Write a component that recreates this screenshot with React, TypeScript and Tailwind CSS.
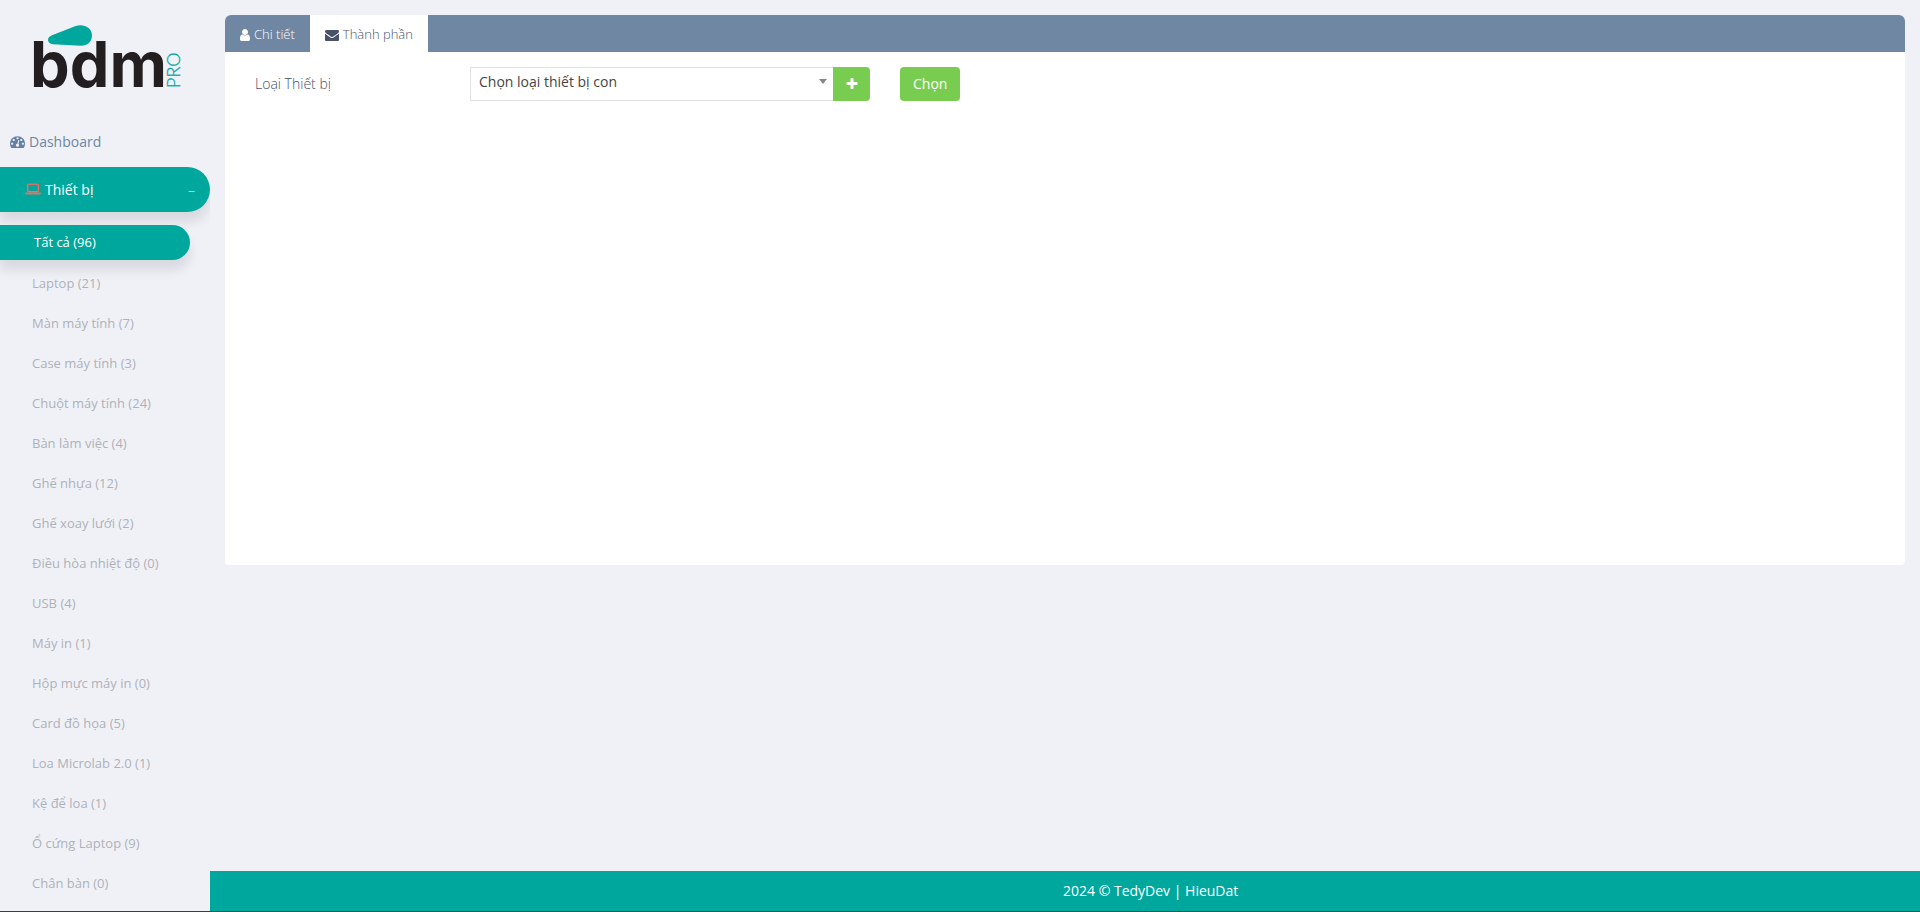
import type { ReactNode } from 'react';

const categories = [
    { name: 'Laptop', count: 21 },
    { name: 'Màn máy tính', count: 7 },
    { name: 'Case máy tính', count: 3 },
    { name: 'Chuột máy tính', count: 24 },
    { name: 'Bàn làm việc', count: 4 },
    { name: 'Ghế nhựa', count: 12 },
    { name: 'Ghế xoay lưới', count: 2 },
    { name: 'Điều hòa nhiệt độ', count: 0 },
    { name: 'USB', count: 4 },
    { name: 'Máy in', count: 1 },
    { name: 'Hộp mực máy in', count: 0 },
    { name: 'Card đồ họa', count: 5 },
    { name: 'Loa Microlab 2.0', count: 1 },
    { name: 'Kệ để loa', count: 1 },
    { name: 'Ổ cứng Laptop', count: 9 },
    { name: 'Chân bàn', count: 0 },
];

function Glyph({ viewBox, d, className }: { viewBox: string; d: string; className: string }) {
    return (
        <svg viewBox={viewBox} fill="currentColor" aria-hidden="true" className={`shrink-0 ${className}`}>
            <path d={d} />
        </svg>
    );
}

function DashboardIcon() {
    return (
        <Glyph
            viewBox="0 0 1792 1792"
            className="mb-0.5 size-[15px] text-[#6480a3]"
            d="M384 1152q0-53-37.5-90.5t-90.5-37.5-90.5 37.5-37.5 90.5 37.5 90.5 90.5 37.5 90.5-37.5 37.5-90.5zm192-448q0-53-37.5-90.5t-90.5-37.5-90.5 37.5-37.5 90.5 37.5 90.5 90.5 37.5 90.5-37.5 37.5-90.5zm428 481l101-382q6-26-7.5-48.5t-38.5-29.5-48 6.5-30 39.5l-101 382q-60 5-107 43.5t-63 98.5q-20 77 20 146t117 89 146-20 89-117q16-60-6-117t-72-91zm660-33q0-53-37.5-90.5t-90.5-37.5-90.5 37.5-37.5 90.5 37.5 90.5 90.5 37.5 90.5-37.5 37.5-90.5zm-640-640q0-53-37.5-90.5t-90.5-37.5-90.5 37.5-37.5 90.5 37.5 90.5 90.5 37.5 90.5-37.5 37.5-90.5zm448 192q0-53-37.5-90.5t-90.5-37.5-90.5 37.5-37.5 90.5 37.5 90.5 90.5 37.5 90.5-37.5 37.5-90.5zm320 448q0 261-141 483-19 29-54 29h-1402q-35 0-54-29-141-221-141-483 0-182 71-348t191-286 286-191 348-71 348 71 286 191 191 286 71 348z"
        />
    );
}

function LaptopIcon() {
    return (
        <Glyph
            viewBox="0 0 1920 1792"
            className="h-[15px] w-4 stroke-current stroke-[30] text-[#ff6c60]"
            d="M416 1216q-66 0-113-47t-47-113v-704q0-66 47-113t113-47h1088q66 0 113 47t47 113v704q0 66-47 113t-113 47h-1088zm-32-864v704q0 13 9.5 22.5t22.5 9.5h1088q13 0 22.5-9.5t9.5-22.5v-704q0-13-9.5-22.5t-22.5-9.5h-1088q-13 0-22.5 9.5t-9.5 22.5zm1376 928h160v96q0 40-47 68t-113 28h-1600q-66 0-113-28t-47-68v-96h1760zm-720 96q16 0 16-16t-16-16h-160q-16 0-16 16t16 16h160z"
        />
    );
}

function UserIcon() {
    return (
        <Glyph
            viewBox="0 0 1280 1792"
            className="h-3.5 w-2.5"
            d="M1280 1399q0 109-62.5 187t-150.5 78h-854q-88 0-150.5-78t-62.5-187q0-85 8.5-160.5t31.5-152 58.5-131 94-89 134.5-34.5q131 128 313 128t313-128q76 0 134.5 34.5t94 89 58.5 131 31.5 152 8.5 160.5zm-256-887q0 159-112.5 271.5t-271.5 112.5-271.5-112.5-112.5-271.5 112.5-271.5 271.5-112.5 271.5 112.5 112.5 271.5z"
        />
    );
}

function EnvelopeIcon() {
    return (
        <Glyph
            viewBox="0 0 1792 1792"
            className="size-3.5"
            d="M1792 710v794q0 66-47 113t-113 47h-1472q-66 0-113-47t-47-113v-794q44 49 101 87 362 246 497 345 57 42 92.5 65.5t94.5 48 110 24.5h2q51 0 110-24.5t94.5-48 92.5-65.5q170-123 498-345 57-39 100-87zm0-294q0 79-49 151t-122 123q-376 261-468 325-10 7-42.5 31t-54 38.8-52 32.5-57.5 27-50 9h-2q-23 0-50-9t-57.5-27-52-32.5-54-38.8-42.5-31q-91-64-262-182.5t-205-142.5q-62-42-117-115.5t-55-136.5q0-78 41.5-130t118.5-52h1472q65 0 112.5 47t47.5 113z"
        />
    );
}

function PlusIcon() {
    return (
        <Glyph
            viewBox="192 0 1408 1792"
            className="h-3.5 w-3"
            d="M1600 736v192q0 40-28 68t-68 28h-416v416q0 40-28 68t-68 28h-192q-40 0-68-28t-28-68v-416h-416q-40 0-68-28t-28-68v-192q0-40 28-68t68-28h416v-416q0-40 28-68t68-28h192q40 0 68 28t28 68v416h416q40 0 68 28t28 68z"
        />
    );
}

function Logo() {
    return (
        <svg viewBox="0 0 170 100" className="h-[100px] w-[170px]" role="img" aria-label="bdm PRO">
            <path
                fill="#00a79d"
                d="M28 20.300 51 11.200C59.500 8 68 12.500 68 20.500c0 6.500-5 10.500-11.500 10.200L29 29.300c-6.500-.6-6.500-7.200-1-9z"
            />
            <text x="6" y="72" fontSize="63" fontWeight="700" fill="#231f20" className="font-[Inter,sans-serif]">
                bdm
            </text>
            <text
                transform="translate(156 73) rotate(-90)"
                fontSize="18"
                fontWeight="300"
                fill="#00a79d"
                stroke="#00a79d"
                strokeWidth="0.3"
                className="font-[Lato,sans-serif]"
            >
                PRO
            </text>
        </svg>
    );
}

function Tab({ active, icon, children }: { active?: boolean; icon: ReactNode; children: ReactNode }) {
    return (
        <button
            type="button"
            role="tab"
            aria-selected={!!active}
            className={`flex items-center gap-1 px-[15px] pt-0.5 text-[13px] font-light ${
                active ? 'bg-white text-[#475168]' : 'text-white'
            }`}
        >
            {icon}
            {children}
        </button>
    );
}

function Sidebar() {
    return (
        <aside className="w-[210px] shrink-0 overflow-hidden">
            <a href="#" className="block pt-[15px] pl-6">
                <Logo />
            </a>

            <nav className="mt-2.5">
                <a href="#" className="flex h-[34px] items-center gap-1 pl-2.5 text-sm text-[#6f85a0]">
                    <DashboardIcon />
                    Dashboard
                </a>
                <a
                    href="#"
                    className="mt-2 flex h-[45px] items-center gap-1 rounded-l-sm rounded-r-full bg-[#00a79d] pr-[15px] pl-[25px] text-sm text-white shadow-[0_10px_12px_rgba(0,0,0,0.1)]"
                >
                    <LaptopIcon />
                    <span className="grow">Thiết bị</span>
                    <span className="text-sm font-light text-white/80">–</span>
                </a>

                {/* Device categories */}
                <ul className="mt-[13px] flex flex-col gap-[5px] text-[13px] text-[#aeb2b7]">
                    <li>
                        <a
                            href="#"
                            className="mr-5 flex h-[35px] items-center rounded-r-full bg-[#00a79d] pl-[34px] text-white shadow-[0_10px_12px_rgba(0,0,0,0.1)]"
                        >
                            Tất cả (96)
                        </a>
                    </li>
                    {categories.map((item) => (
                        <li key={item.name}>
                            <a href="#" className="flex h-[35px] items-center pt-0.5 pl-8">
                                {item.name} ({item.count})
                            </a>
                        </li>
                    ))}
                </ul>
            </nav>
        </aside>
    );
}

export default function App() {
    return (
        <div className="flex h-screen flex-col overflow-hidden border-b border-[#3c3e46] bg-[#f0f1f7] font-['Open_Sans',sans-serif]">
            <div className="flex min-h-0 grow">
                <Sidebar />

                <div className="flex min-w-0 grow flex-col">
                    <main className="grow p-[15px]">
                        <section className="min-h-[550px] overflow-hidden rounded-t-md rounded-b-sm bg-white">
                            <div role="tablist" className="flex h-[37px] bg-[#7087a3]">
                                <Tab icon={<UserIcon />}>Chi tiết</Tab>
                                <Tab active icon={<EnvelopeIcon />}>
                                    Thành phần
                                </Tab>
                            </div>

                            <form className="flex items-center px-[30px] pt-[15px] text-sm">
                                <label htmlFor="device-type" className="w-[215px] font-light text-[#475168]">
                                    Loại Thiết bị
                                </label>
                                <div className="flex h-[34px] w-[400px]">
                                    <div className="relative grow">
                                        <select
                                            id="device-type"
                                            className="h-full w-full appearance-none border border-r-0 border-[#dfe1e5] bg-white pr-8 pb-1 pl-2 text-[#444444]"
                                        >
                                            <option>Chọn loại thiết bị con</option>
                                        </select>
                                        <svg
                                            viewBox="0 0 8 5"
                                            fill="#888888"
                                            aria-hidden="true"
                                            className="pointer-events-none absolute top-3 right-1.5 h-[5px] w-2"
                                        >
                                            <path d="M0 0h8L4 5z" />
                                        </svg>
                                    </div>
                                    <button
                                        type="button"
                                        aria-label="+"
                                        className="flex w-[37px] items-center justify-center rounded-r-sm bg-[#78cd51] text-white"
                                    >
                                        <PlusIcon />
                                    </button>
                                </div>
                                <button
                                    type="button"
                                    className="ml-[30px] h-[34px] rounded-sm bg-[#78cd51] px-[13px] text-white"
                                >
                                    Chọn
                                </button>
                            </form>
                        </section>
                    </main>

                    <footer className="grid h-10 shrink-0 grid-cols-2 items-center bg-[#00a79d] pr-1 text-sm text-white">
                        <p className="col-start-2">2024 © TedyDev | HieuDat</p>
                    </footer>
                </div>
            </div>
        </div>
    );
}
